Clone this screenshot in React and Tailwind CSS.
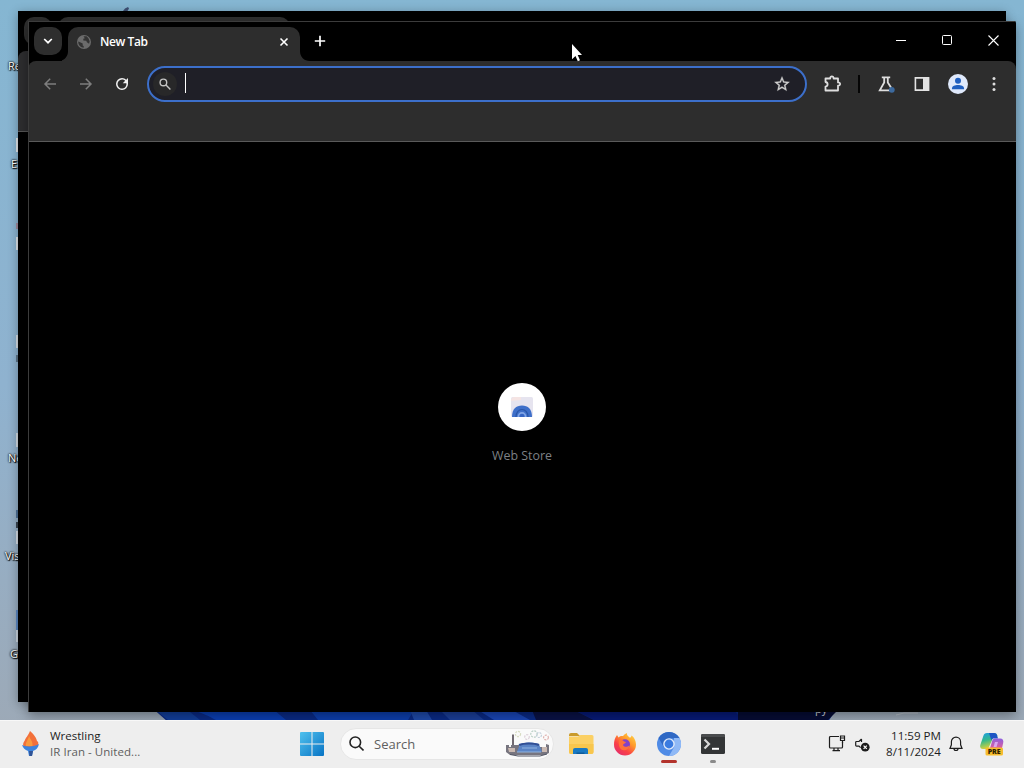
import React, { useState } from "react"

const desktopLabels = [
  { text: "Re", left: 8, top: 58 },
  { text: "E", left: 11, top: 156 },
  { text: "Ne", left: 8, top: 450 },
  { text: "Vis", left: 5, top: 548 },
  { text: "G", left: 10, top: 646 },
]

const desktopMarks = [
  { top: 138, height: 14, color: "#e3e7ea" },
  { top: 223, height: 6, color: "#a08a9c" },
  { top: 237, height: 13, color: "#dfe5ea" },
  { top: 335, height: 13, color: "#d5dde4" },
  { top: 355, height: 7, color: "#5d7488" },
  { top: 433, height: 14, color: "#d3dbe3" },
  { top: 510, height: 8, color: "#4f7196" },
  { top: 522, height: 6, color: "#3a4650" },
  { top: 531, height: 13, color: "#d5dce4" },
  { top: 610, height: 20, color: "#5a86c0" },
  { top: 630, height: 12, color: "#c9d3de" },
]

const Desktop = () => (
  <>
    <svg className="absolute left-0 top-[706px]" width="1024" height="16">
      <path d="M150 0H838L828 16H168Z" fill="#0a2a86" />
      <path d="M158 6l10 8h32l-10-8z" fill="#123f9c" />
      <path d="M192 4c14 4 20 8 24 10h70l-12-10z" fill="#0b3fb4" />
      <path d="M310 4l8 10h90l6-10z" fill="#0d3fae" />
      <path d="M410 4l4 10h18l-6-10z" fill="#1f4bab" />
      <path d="M440 4l10 10h34l-12-10z" fill="#1b3f9a" />
      <path d="M478 4l16 10h36l-18-10z" fill="#1a47b8" />
      <path d="M532 4h42l20 10h-58z" fill="#0a1246" />
      <path d="M574 4h160l8 10H594z" fill="#071a78" />
      <path d="M738 4h100l-10 10h-90z" fill="#060c34" />
      <path d="M896 9l8-2h14" stroke="#b9c1cb" strokeWidth="1" fill="none" />
    </svg>
    <span className="absolute left-[815px] top-[702px] text-[11px] leading-[14px] text-gray-300">py</span>
    {desktopMarks.map((mark) => (
      <div
        key={mark.top}
        className="absolute left-[16px] w-[2px]"
        style={{ top: mark.top, height: mark.height, backgroundColor: mark.color }}
      />
    ))}
    {desktopLabels.map((label) => (
      <span
        key={label.text}
        className="absolute text-[11px] leading-4 text-white [text-shadow:1px_1px_1px_#000,0_0_2px_#000,0_0_2px_#000]"
        style={{ left: label.left, top: label.top }}
      >
        {label.text}
      </span>
    ))}
    <svg className="absolute left-[122px] top-[6px]" width="8" height="6" viewBox="0 0 8 6">
      <path d="M1 5l2-2.500 3-1.500 1 1.500-1.500 2.500z" fill="#3e4f74" />
    </svg>
  </>
)

const BackWindow = () => (
  <div className="absolute left-[18px] top-[11px] h-[691px] w-[988px] overflow-hidden bg-black shadow-[0_2px_10px_rgba(0,0,0,0.3)]">
    <div className="flex h-[40px] pl-[6px] pt-[6px]">
      <div className="h-7 w-7 rounded-[10px] bg-[#2e2e2e]" />
      <div className="ml-[6px] h-[34px] w-[232px] rounded-t-[10px] bg-[#2f2f2f]" />
    </div>
    <div className="h-[81px] rounded-tl-lg border-b border-[#555] bg-[#2d2d2f]" />
  </div>
)

const IconBox = ({ children }) => (
  <button className="flex h-9 w-9 shrink-0 items-center justify-center">{children}</button>
)

const TitleBar = () => (
  <div className="flex h-10 items-start pl-[6px] pt-[6px]">
    <button className="flex h-7 w-7 items-center justify-center rounded-[10px] bg-[#2e2e2e]">
      <svg width="10" height="8" viewBox="0 0 10 8" fill="none" stroke="#fff" strokeWidth="1.700">
        <path d="M1.200 2L5 5.700L8.800 2" />
      </svg>
    </button>
    <div className="flex h-[34px] items-end">
      <svg width="6" height="10" viewBox="0 0 6 10" fill="#2d2d2d">
        <path d="M6 0v10H-4C2 10 6 6 6 0z" />
      </svg>
      <div className="flex h-[34px] w-[232px] items-center rounded-t-[10px] bg-[#2d2d2d] pb-[5px] pl-2">
        <svg width="16" height="16" viewBox="0 0 16 16">
          <circle cx="8" cy="8" r="7" fill="#6b6b6b" />
          <path
            d="M2.500 7.500l4.200 2v2l1 .5v1.800A5.800 5.800 0 012.200 8zM7.500 2.300h3l1.800 1.600 1.400 3.300-.6 2.500-2.200-1.500-.6-1.400-3-.4V4.800l1.500-.5z"
            fill="#333"
          />
        </svg>
        <span className="ml-2 text-[12px] font-semibold leading-4 tracking-[-0.4px] text-white">New Tab</span>
        <svg className="ml-auto mr-[11px]" width="10" height="10" viewBox="0 0 10 10" stroke="#fff" strokeWidth="1.600">
          <path d="M1.500 1.500L8.500 8.500M8.500 1.500L1.500 8.500" />
        </svg>
      </div>
      <svg width="10" height="10" viewBox="0 0 10 10" fill="#2d2d2d">
        <path d="M0 0v10h10C4 10 0 6 0 0z" />
      </svg>
    </div>
    <svg className="ml-[4px] mt-[8px]" width="12" height="12" viewBox="0 0 12 12" stroke="#fff" strokeWidth="1.700">
      <path d="M6 .8v10.400M.8 6h10.400" />
    </svg>
    <div className="-mt-px ml-auto flex h-[28px] items-center text-white">
      <div className="flex w-[46px] justify-center">
        <div className="h-px w-[10px] bg-white" />
      </div>
      <div className="flex w-[46px] justify-center">
        <div className="h-[10px] w-[10px] rounded-[1.5px] border border-white" />
      </div>
      <div className="flex w-[46px] justify-center">
        <svg width="11" height="11" viewBox="0 0 11 11" stroke="#fff" strokeWidth="1.100">
          <path d="M.5 .5l10 10M10.500 .5l-10 10" />
        </svg>
      </div>
    </div>
  </div>
)

const Toolbar = () => {
  const [query, setQuery] = useState("")

  return (
    <div className="h-[81px] rounded-t-lg border-b border-[#5a5a5a] bg-[#2d2d2d]">
      <div className="flex h-[46px] items-center pl-[4px]">
        <IconBox>
          <svg width="14" height="14" viewBox="0 0 14 14" fill="none" stroke="#7e7e7e" strokeWidth="1.500">
            <path d="M13 7H2M7.200 1.800L2 7L7.200 12.200" />
          </svg>
        </IconBox>
        <IconBox>
          <svg width="14" height="14" viewBox="0 0 14 14" fill="none" stroke="#7e7e7e" strokeWidth="1.500">
            <path d="M1 7h11M6.800 1.800L12 7L6.800 12.200" />
          </svg>
        </IconBox>
        <IconBox>
          <svg width="18" height="18" viewBox="0 0 24 24" fill="#f1f1f1">
            <path d="M17.650 6.350A7.960 7.960 0 0012 4a8 8 0 108 8 7.700 7.700 0 00-.25-2h-2.100A6 6 0 1112 6c1.660 0 3.140.69 4.220 1.780L13 11h7V4z" />
          </svg>
        </IconBox>
        <div className="ml-[7px] flex h-9 w-[660px] items-center rounded-full border-2 border-[#3c6fca] bg-[#1f1f27] pl-[4px] pr-[6px]">
          <div className="flex h-6 w-6 items-center justify-center rounded-full bg-[#282829]">
            <svg width="12" height="12" viewBox="0 0 12 12" fill="none" stroke="#c4c4c4" strokeWidth="1.400">
              <circle cx="4.400" cy="4.400" r="3.300" />
              <path d="M7 7l4.400 4.400" />
            </svg>
          </div>
          <div className="ml-[8px] h-[20px] w-px -translate-y-px bg-white" />
          <input
            value={query}
            onChange={(e) => setQuery(e.target.value)}
            className="min-w-0 flex-1 bg-transparent text-sm text-white outline-none"
          />
          <IconBox>
            <svg className="translate-x-[1px]" width="18" height="18" viewBox="0 0 24 24" fill="#cfcfcf" stroke="#cfcfcf" strokeWidth=".4">
              <path d="M22 9.240l-7.190-.62L12 2 9.190 8.630 2 9.240l5.460 4.730L5.820 21 12 17.270 18.180 21l-1.630-7.030L22 9.240zM12 15.400l-3.760 2.270 1-4.280-3.320-2.880 4.380-.38L12 6.100l1.710 4.040 4.380.38-3.320 2.880 1 4.280L12 15.400z" />
            </svg>
          </IconBox>
        </div>
        <div className="ml-[7px] flex">
          <IconBox>
            <svg width="20" height="20" viewBox="0 0 20 20" fill="none" stroke="#dedede" strokeWidth="1.800" strokeLinejoin="round">
              <path d="M3.500 4.500H8.200C8 1.700 11.800 1.700 11.600 4.500H16V8.400C18.800 8.200 18.800 11.800 16 11.600V16.500H3.500V12.600C6.300 12.200 6.300 8.400 3.500 8Z" />
            </svg>
          </IconBox>
        </div>
        <div className="ml-[8px] h-[18px] w-[2px] bg-[#050505]" />
        <div className="ml-[8px] flex">
          <IconBox>
            <svg width="20" height="20" viewBox="0 0 20 20" fill="none">
              <path d="M5.800 3.400h8.400M8.200 3.500v5L3.800 16.400h10M11.800 3.500v5l3.200 5" stroke="#dedede" strokeWidth="1.800" />
              <circle cx="15.800" cy="15.800" r="2.900" fill="#3d6a9e" />
            </svg>
          </IconBox>
          <IconBox>
            <svg width="16" height="16" viewBox="0 0 16 16">
              <path d="M1.400 1.900h13.200v12.200H1.400z" fill="none" stroke="#e3e3e3" strokeWidth="1.600" />
              <path d="M9 1.500h6v13H9z" fill="#e3e3e3" />
            </svg>
          </IconBox>
          <IconBox>
            <svg width="20" height="20" viewBox="0 0 20 20">
              <circle cx="10" cy="10" r="10" fill="#dfe9fb" />
              <circle cx="10" cy="6.800" r="3" fill="#1f5fc0" />
              <path d="M4 15.200v-1c0-2 3-3.200 6-3.200s6 1.200 6 3.200v1z" fill="#1f5fc0" />
            </svg>
          </IconBox>
          <IconBox>
            <svg width="4" height="16" viewBox="0 0 4 16" fill="#dedede">
              <circle cx="2" cy="2.500" r="1.500" />
              <circle cx="2" cy="8" r="1.500" />
              <circle cx="2" cy="13.500" r="1.500" />
            </svg>
          </IconBox>
        </div>
      </div>
    </div>
  )
}

const BrowserWindow = () => (
  <div className="absolute left-[28px] top-[21px] flex h-[691px] w-[988px] flex-col overflow-hidden rounded-tr-[2px] bg-black shadow-[0_4px_12px_rgba(0,0,0,0.35)]">
    <TitleBar />
    <Toolbar />
    <div className="flex flex-1 flex-col items-center pt-[241px]">
      <div className="flex h-12 w-12 items-center justify-center rounded-full bg-white">
        <svg width="22" height="20" viewBox="0 0 22 20">
          <rect x="0" y="0" width="22" height="20" rx="1.500" fill="#e6e4ef" />
          <path d="M0 4a4 4 0 014-4h6v3z" fill="#f5e4e3" />
          <path d="M1 20C1 12 5 8.500 11 8.500S21 12 21 20z" fill="#3e6fc9" />
          <path d="M5 20c0-5 3-7.500 6-7.500s6 2.500 6 7.500" fill="none" stroke="#2a56a8" strokeWidth="1.200" />
          <path d="M6.500 20a4.500 5 0 019 0z" fill="#7fa4e6" />
          <path d="M8.300 20a2.700 3.200 0 015.400 0z" fill="#3565c4" />
        </svg>
      </div>
      <span className="mt-[17px] text-[12.4px] leading-4 text-[#7d8185]">Web Store</span>
    </div>
    <div className="pointer-events-none absolute inset-0 border-l border-t border-[#3c3c3c]" />
  </div>
)

const Cursor = () => (
  <svg className="absolute left-[571px] top-[43px]" width="12" height="20" viewBox="0 0 12 20">
    <path d="M1 1v15.200l3.500-3.300 2.300 5.300 2.200-1-2.300-5.100H11z" fill="#fff" />
  </svg>
)

const FileExplorerIcon = () => (
  <svg width="26" height="24" viewBox="0 0 26 24">
    <path d="M1 3a2 2 0 012-2h6l3 3H1z" fill="#c99a2c" />
    <path d="M1 4.500h9L12.500 3H24a1.500 1.500 0 011.500 1.500V20a2 2 0 01-2 2H3a2 2 0 01-2-2z" fill="#fbd064" />
    <path d="M1 12h24.500v8a2 2 0 01-2 2H3a2 2 0 01-2-2z" fill="#f8c64d" />
    <path d="M5 22v-4a2 2 0 012-2h11a2 2 0 012 2v4z" fill="#1979c2" />
    <path d="M8.500 22v-1.500h8V22z" fill="#0e5a99" />
  </svg>
)

const FirefoxIcon = () => (
  <svg width="24" height="24" viewBox="0 0 24 24">
    <defs>
      <linearGradient id="fox" x1="1" y1="0" x2="0.2" y2="1">
        <stop offset="0" stopColor="#ffe14a" />
        <stop offset=".4" stopColor="#ff9a2b" />
        <stop offset=".7" stopColor="#fb4245" />
        <stop offset="1" stopColor="#e22c6f" />
      </linearGradient>
    </defs>
    <path
      d="M2.500 5.500L4 3l1.500 2.500C7 4 8.500 3.800 10 4c.5-.2 2-2.500 4-3-.3 1.700.5 2.700 2 4 1 .9 2 .8 2.500-1.500C21 5 23 9 23 12.500a11 11 0 01-22 0c0-3 .5-5 1.500-7z"
      fill="url(#fox)"
    />
    <circle cx="12" cy="12.200" r="5" fill="#8242c8" />
    <path d="M6 8c2-.5 4 0 5 1.500l2 .5c-.5 1.500-2.500 1.500-3 3 .5 2 4 2.500 6.500.5-.5 3-3 5-5.500 4.800C7 18 5 14 6 8z" fill="#ff7139" />
  </svg>
)

const ChromiumIcon = () => (
  <svg width="24" height="24" viewBox="0 0 24 24">
    <circle cx="12" cy="12" r="12" fill="#4f8be6" />
    <path d="M1.600 6A12 12 0 0122.400 6L12 6.500 6.800 15z" fill="#2f68c4" />
    <path d="M22.400 6A12 12 0 0112 24l5.200-9L17 6z" fill="#8fb9f6" />
    <circle cx="12" cy="12" r="5.800" fill="#dfeafa" />
    <circle cx="12" cy="12" r="4.400" fill="#3a7be0" />
  </svg>
)

const TerminalIcon = () => (
  <svg width="24" height="20" viewBox="0 0 24 20">
    <rect width="24" height="20" rx="1.500" fill="#333536" />
    <path d="M0 1.500A1.500 1.500 0 011.500 0h21A1.500 1.500 0 0124 1.500V3H0z" fill="#4a4c4e" />
    <path d="M3.500 5.500l4.500 4.500-4.500 4.500" fill="none" stroke="#d8d8d8" strokeWidth="2.200" />
    <path d="M11 14.800h7" stroke="#fff" strokeWidth="2" />
  </svg>
)

const SearchArt = () => (
  <svg width="46" height="27" viewBox="0 0 46 27">
    <g fill="none" strokeWidth="1.200" strokeDasharray="2 1">
      <circle cx="13" cy="4" r="2.600" stroke="#d8dcc2" />
      <circle cx="22" cy="7" r="2.300" stroke="#ddd0da" />
      <circle cx="29" cy="4" r="3.200" stroke="#b8cfc4" />
      <circle cx="34" cy="5" r="2.500" stroke="#c5d1dc" />
      <circle cx="41" cy="7.500" r="2.400" stroke="#e0b3b0" />
    </g>
    <path d="M7 15V4.500h2V15z" fill="#716a72" />
    <path d="M1 15h3v2h2v-2h8v4h20v-2h7v-3l3 1v8l-4 2H5l-4-3z" fill="#77757f" />
    <path d="M3 18h7v4H4zM37 17h5v5h-5z" fill="#c9b9b2" />
    <path d="M12 22l3-8c5-2 14-2 19 0l3 8z" fill="#5a84c6" />
    <path d="M14 15c5-2 15-2 20 0" stroke="#314f94" strokeWidth="2" fill="none" />
    <path d="M12 22h24M17 18h15" stroke="#8fb3df" strokeWidth="1.200" />
    <path d="M5 24.500l8 1.500h22l7-2" stroke="#525766" strokeWidth="1" fill="none" />
  </svg>
)

const CopilotIcon = () => (
  <svg width="24" height="24" viewBox="0 0 24 24">
    <defs>
      <linearGradient id="copA" x1="0" y1="0" x2="0.3" y2="1">
        <stop offset="0" stopColor="#1a9be8" />
        <stop offset=".5" stopColor="#35b98c" />
        <stop offset="1" stopColor="#d9d23a" />
      </linearGradient>
      <linearGradient id="copB" x1="0.5" y1="0" x2="0.5" y2="1">
        <stop offset="0" stopColor="#8c5fe0" />
        <stop offset="1" stopColor="#ee5f8d" />
      </linearGradient>
    </defs>
    <path d="M7 1h7c2 0 3 1 3.500 3L13 6 9 15c-.5 1.500-1.500 2-3 2H3c-2.500 0-3.300-2-2.700-4L3.500 3.500C4 2 5 1 7 1z" fill="url(#copA)" />
    <path d="M9 1h5c2 0 2.800 1 3.300 3l.7 2.500h-4c-1.500 0-2.200.5-2.600 2z" fill="#1d55c4" />
    <path d="M15 6.500h5c2.800 0 3.800 2 3.200 4.500L21.500 18H9.500l2.600-9c.5-1.500 1.300-2.500 2.900-2.500z" fill="url(#copB)" />
    <path d="M15 10h3l-1.500 5h-3z" fill="#d9a6f1" />
    <rect x="5.500" y="15.500" width="17.500" height="8" rx="1.500" fill="#f7bd2d" />
    <text x="14.200" y="22.200" textAnchor="middle" fontSize="7" fontWeight="800" fill="#2b2100">
      PRE
    </text>
  </svg>
)

const TaskButton = ({ children, indicator }) => (
  <button className="relative flex h-12 w-11 items-center justify-center">
    {children}
    {indicator === "active" && <span className="absolute bottom-[5px] h-[3px] w-4 rounded-full bg-[#b3332c]" />}
    {indicator === "open" && <span className="absolute bottom-[5px] h-[3px] w-[6px] rounded-full bg-[#8a8a8a]" />}
  </button>
)

const Taskbar = () => (
  <div className="absolute bottom-0 left-0 flex h-12 w-full items-center border-t border-[#f8f8f8] bg-[#eeeeee] pb-[2px]">
    <div className="flex w-[291px] items-center pl-[21px]">
      <svg width="20" height="26" viewBox="0 0 20 26">
        <path d="M9 0c1 1 6 5 7 10 2 1 1.500 4 0 6H3c-2-3 0-5 1-7 .5-2 3-4 5-9z" fill="#f2703a" />
        <path d="M8 5c1 3 4 5 3.500 10H5c-1-4 2-5 3-10z" fill="#fa9a3e" />
        <path d="M1 14c3 2 13 2 17-1-1 4-3 6-6 7l-1 5H8l-1-5c-3-1-5-3-6-6z" fill="#3d83dc" />
        <path d="M8 20h4l-1 5H8.500z" fill="#315496" />
      </svg>
      <div className="ml-[9px] text-[11.5px] leading-4">
        <div className="text-[#1d1d1d]">Wrestling</div>
        <div className="text-[#5e5e5e] tracking-[0.05px]">IR Iran - United...</div>
      </div>
    </div>
    <TaskButton>
      <svg className="-translate-x-px" width="24" height="24" viewBox="0 0 24 24">
        <defs>
          <linearGradient id="win" x1="0" y1="0" x2="1" y2="1">
            <stop offset="0" stopColor="#4fc1ee" />
            <stop offset="1" stopColor="#0873c4" />
          </linearGradient>
        </defs>
        <path d="M0 1a1 1 0 011-1h10.500v11.500H0zM12.500 0H23a1 1 0 011 1v10.500H12.500zM0 12.500h11.500V24H1a1 1 0 01-1-1zM12.500 12.500H24V23a1 1 0 01-1 1H12.500z" fill="url(#win)" />
      </svg>
    </TaskButton>
    <div className="ml-[5px] flex h-8 w-[214px] items-center rounded-full border border-[#e6e6e6] bg-[#fafafa] pl-[8px] pr-[2px]">
      <svg width="15" height="15" viewBox="0 0 15 15" fill="none" stroke="#222" strokeWidth="1.600">
        <circle cx="6.300" cy="6.300" r="5.300" />
        <path d="M10.200 10.200l4.300 4.300" />
      </svg>
      <span className="ml-[10px] text-[13px] leading-4 text-[#606060]">Search</span>
      <div className="ml-auto">
        <SearchArt />
      </div>
    </div>
    <div className="ml-[5px] flex">
      <TaskButton>
        <FileExplorerIcon />
      </TaskButton>
      <TaskButton>
        <FirefoxIcon />
      </TaskButton>
      <TaskButton indicator="active">
        <ChromiumIcon />
      </TaskButton>
      <TaskButton indicator="open">
        <TerminalIcon />
      </TaskButton>
    </div>
    <div className="ml-auto flex items-center pr-[20px]">
      <svg width="18" height="17" viewBox="0 0 18 17" fill="none" stroke="#1d1d1d" strokeWidth="1.200">
        <path d="M11 1.500H2.500a1 1 0 00-1 1v9.500a1 1 0 001 1h11a1 1 0 001-1V7M6 13v2.500M10 13v2.500M4.500 15.700h7.500" />
        <path d="M12.500 1h4v4.500h-4zM12.500 3h4M14.500 5.500V8" />
      </svg>
      <svg className="ml-[9px] mt-[3px]" width="15" height="14" viewBox="0 0 15 14" fill="none" stroke="#1d1d1d" strokeWidth="1.200">
        <path d="M6.500 1L4 3.500H1.500a.8.8 0 00-.8.8v3a.8.8 0 00.8.8H4l1.500 1.500M6.500 1v3" />
        <circle cx="10.200" cy="9.200" r="4.400" fill="#1d1d1d" stroke="none" />
        <path d="M8.600 7.600l3.200 3.200M11.800 7.600l-3.200 3.200" stroke="#fff" />
      </svg>
      <div className="ml-[16px] text-right text-[11.6px] leading-4 text-[#1d1d1d]">
        <div>11:59 PM</div>
        <div>8/11/2024</div>
      </div>
      <svg className="ml-[8px]" width="14" height="16" viewBox="0 0 14 16" fill="none" stroke="#1d1d1d" strokeWidth="1.200">
        <path d="M7 1.200a4.600 4.600 0 00-4.600 4.600v3L1 12.300h12L11.600 8.800v-3A4.600 4.600 0 007 1.200zM5 12.500a2 2 0 004 0" />
      </svg>
      <div className="ml-[17px]">
        <CopilotIcon />
      </div>
    </div>
  </div>
)

const App = () => {
  return (
    <div className="relative h-[768px] w-[1024px] overflow-hidden bg-gradient-to-b from-[#85b6d2] via-[#8fb2cf] to-[#9ea8b4] font-['Open_Sans','Noto_Sans',sans-serif]">
      <Desktop />
      <BackWindow />
      <BrowserWindow />
      <Cursor />
      <Taskbar />
    </div>
  )
}

export default App
